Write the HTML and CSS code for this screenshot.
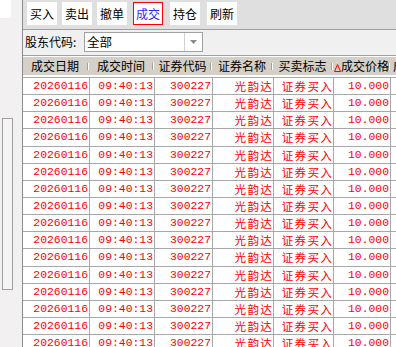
FILE: index.html
```html
<!DOCTYPE html>
<html>
<head>
    <title>成交查询</title>
    <link rel="stylesheet" href="styles.css">
</head>
<body>
    <div class="app">
        <div class="side">
            <div class="side-top"></div>
            <div class="side-bar"></div>
        </div>

        <div class="main">
            <div class="toolbar">
                <button type="button" class="tool">买入</button>
                <button type="button" class="tool">卖出</button>
                <button type="button" class="tool">撤单</button>
                <button type="button" class="tool active">成交</button>
                <button type="button" class="tool">持仓</button>
                <button type="button" class="tool last">刷新</button>
            </div>

            <div class="filter">
                <label class="filter-label">股东代码:</label>
                <div class="combo">
                    <span class="combo-text">全部</span>
                    <span class="combo-btn">
                        <svg width="7" height="4" viewBox="0 0 7 4"><polygon points="0,0 7,0 3.5,4" fill="#8a8a8a"/></svg>
                    </span>
                </div>
            </div>

            <div class="grid">
                <div class="row head">
                    <div class="hcell">成交日期</div>
                    <div class="hcell">成交时间</div>
                    <div class="hcell">证券代码</div>
                    <div class="hcell">证券名称</div>
                    <div class="hcell">买卖标志</div>
                    <div class="hcell sorted">
                        <svg width="7" height="8" viewBox="0 0 7 8"><polygon points="3.5,0.5 6.5,7.5 0.5,7.5" fill="none" stroke="#ff0000" stroke-width="1"/></svg>成交价格
                    </div>
                    <div class="hcell rest">成交数量</div>
                </div>
                <div class="body" id="rows"></div>
            </div>
        </div>
    </div>

    <script>
        // all fills are the same trade, just repeated
        const rows = document.getElementById('rows');
        let html = '';
        for (let i = 0; i < 16; i++) {
            html += `
                <div class="row">
                    <div class="cell num">20260116</div>
                    <div class="cell num">09:40:13</div>
                    <div class="cell num">300227</div>
                    <div class="cell">光韵达</div>
                    <div class="cell">证券买入</div>
                    <div class="cell num">10.000</div>
                    <div class="cell rest"></div>
                </div>`;
        }
        rows.innerHTML = html;
    </script>
</body>
</html>
```

FILE: styles.css
```css
body {
    margin: 0;
    font-family: "Noto Sans CJK SC", sans-serif;
    font-size: 12px;
    background-color: #fff;
    overflow: hidden;
}

.app {
    display: flex;
    height: 347px;
}

.side {
    width: 22px;
    flex-shrink: 0;
    background-color: #f2f0f0;
    border-right: 1px solid #8c8c8c;
}

.side-top {
    width: 11px;
    height: 18px;
    background-color: #fff;
}

.side-bar {
    width: 9px;
    height: 170px;
    margin: 100px 0 0 2px;
    border: 1px solid #a0a0a0;
    background-color: #f4f4f4;
}

.main {
    flex: 1;
    min-width: 0;
    display: flex;
    flex-direction: column;
    overflow: hidden;
}

.toolbar {
    height: 27px;
    padding: 2px 0 0 4px;
    display: flex;
    align-items: flex-start;
    gap: 5px;
    background-color: #dfdfdf;
    border-bottom: 1px solid #a0a0a0;
}

.tool {
    width: 30px;
    height: 23px;
    padding: 0;
    border: none;
    background-color: #fff;
    color: #000;
    font-family: "Noto Sans CJK SC", sans-serif;
    font-size: 12px;
    line-height: 23px;
    box-sizing: border-box;
}

.tool.active {
    margin: 0 2px 0 1px;
    border: 1px solid #ff0000;
    color: #2a2aff;
    line-height: 21px;
}

.tool.last {
    margin-left: 2px;
}

.filter {
    height: 23px;
    padding: 2px 0 0 2px;
    display: flex;
    align-items: flex-start;
    background-color: #f0f0f0;
    border-bottom: 1px solid #a0a0a0;
}

.filter-label {
    width: 59px;
    line-height: 20px;
    color: #000;
}

.combo {
    width: 119px;
    height: 20px;
    display: flex;
    box-sizing: border-box;
    border: 1px solid #a0a0a0;
    background-color: #fff;
}

.combo-text {
    flex: 1;
    padding-left: 2px;
    font-size: 12.5px;
    line-height: 18px;
}

.combo-btn {
    width: 17px;
    display: flex;
    align-items: center;
    justify-content: center;
    border-left: 1px solid #d0d0d0;
}

.grid {
    flex: 1;
    overflow: hidden;
    background-color: #fff;
}

.row {
    display: grid;
    grid-template-columns: 67px 65px 58px 61px 60px 57px 1fr;
}

.head {
    height: 18px;
    margin-top: 1px;
    background-color: #d4d0c8;
}

.hcell {
    padding-right: 3px;
    text-align: center;
    line-height: 18px;
    white-space: nowrap;
    color: #000;
    background-image: linear-gradient(to right, #a0a0a0 1px, #fff 1px);
    background-size: 2px 7px;
    background-position: calc(100% - 1px) center;
    background-repeat: no-repeat;
}

.hcell.sorted svg {
    vertical-align: -1px;
}

.hcell.rest {
    padding: 0 0 0 2px;
    text-align: left;
    background-image: none;
}

.body {
    margin-top: 2px;
}

.body .row {
    height: 17.15px;
    box-sizing: border-box;
    border-top: 1px solid #a8a8a8;
}

.cell {
    padding-right: 0;
    border-right: 1px solid #a8a8a8;
    text-align: right;
    line-height: 16px;
    font-size: 11.6px;
    letter-spacing: 1.2px;
    color: #ff0000;
    white-space: nowrap;
}

.cell.num {
    padding-top: 1px;
    padding-right: 1px;
    line-height: 15px;
    letter-spacing: 0;
    font-family: "Liberation Mono", monospace;
    font-size: 11.4px;
}

.cell.rest {
    border-right: none;
}
```
